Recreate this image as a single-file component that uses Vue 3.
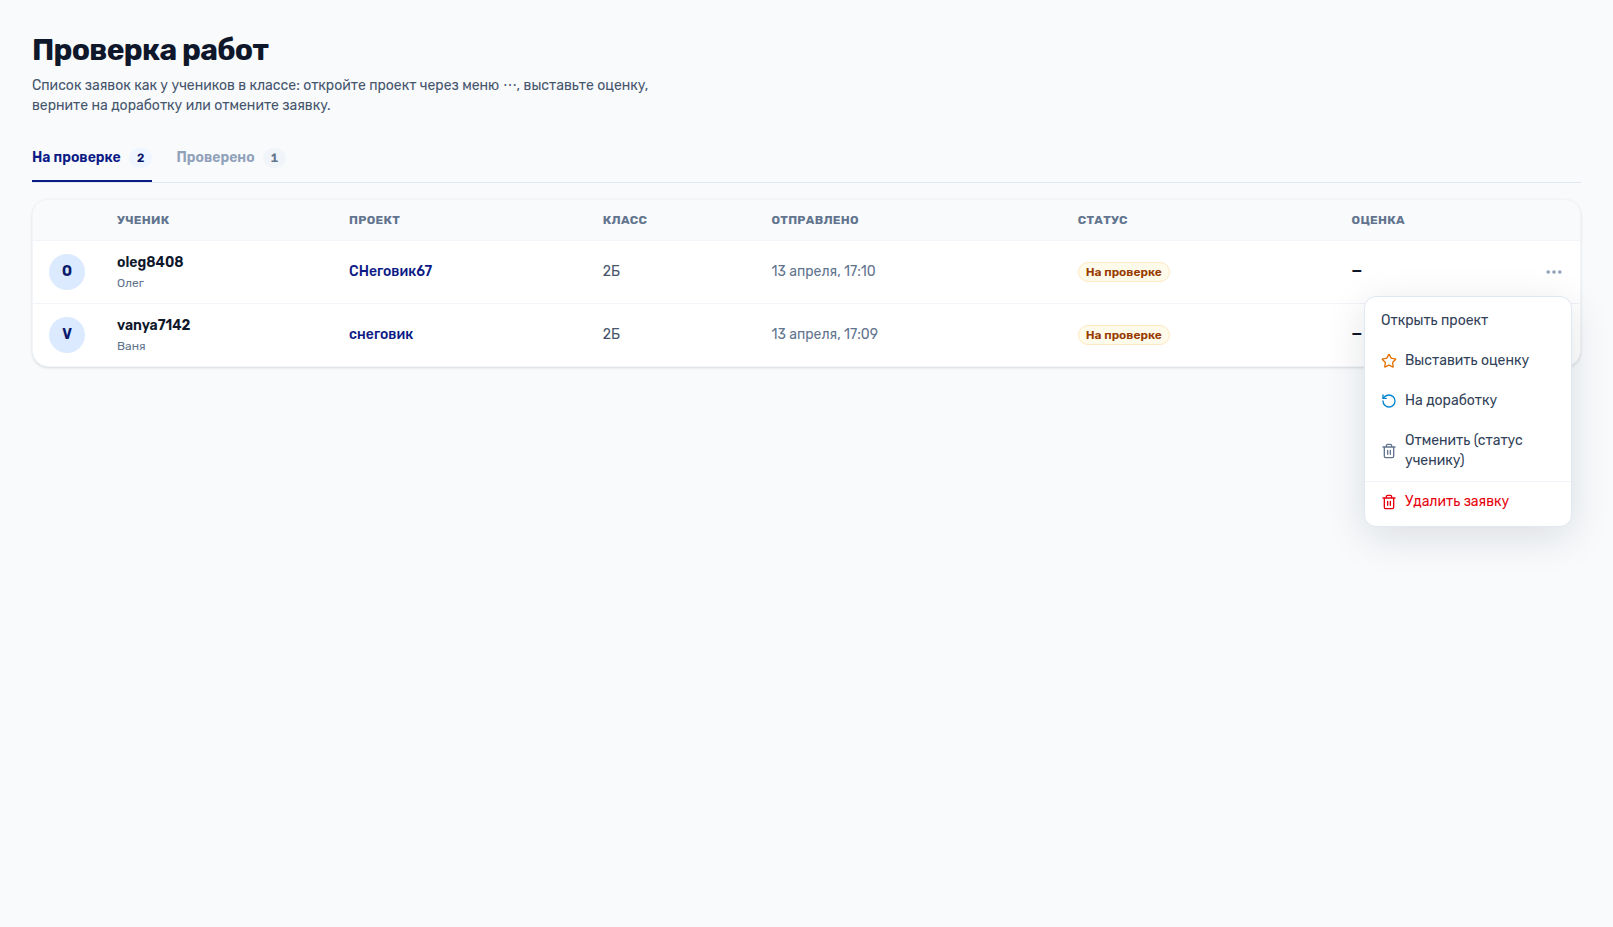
<script setup>
import { ref } from 'vue'

const tab = ref('pending')
const openMenu = ref(1)

const tabs = [
  { id: 'pending', label: 'На проверке', count: 2 },
  { id: 'done', label: 'Проверено', count: 1 },
]

const rows = [
  { id: 1, login: 'oleg8408', name: 'Олег', initial: 'O', project: 'СНеговик67', group: '2Б', sent: '13 апреля, 17:10' },
  { id: 2, login: 'vanya7142', name: 'Ваня', initial: 'V', project: 'снеговик', group: '2Б', sent: '13 апреля, 17:09' },
]

function toggle(id) {
  openMenu.value = openMenu.value === id ? null : id
}
</script>

<template>
  <main class="page">
    <h1 class="title">Проверка работ</h1>
    <p class="lead">
      Список заявок как у учеников в классе: откройте проект через меню ⋯, выставьте оценку,
      верните на доработку или отмените заявку.
    </p>

    <nav class="tabs">
      <button
        v-for="t in tabs"
        :key="t.id"
        type="button"
        class="tab"
        :class="{ active: tab === t.id }"
        @click="tab = t.id"
      >
        {{ t.label }}
        <span class="count">{{ t.count }}</span>
      </button>
    </nav>

    <section class="card">
      <table class="table">
        <thead>
          <tr>
            <th class="c-avatar"></th>
            <th class="c-user">Ученик</th>
            <th class="c-project">Проект</th>
            <th class="c-group">Класс</th>
            <th class="c-sent">Отправлено</th>
            <th class="c-status">Статус</th>
            <th class="c-grade">Оценка</th>
            <th class="c-actions"></th>
          </tr>
        </thead>
        <tbody>
          <tr v-for="r in rows" :key="r.id">
            <td><div class="avatar">{{ r.initial }}</div></td>
            <td>
              <div class="login">{{ r.login }}</div>
              <div class="name">{{ r.name }}</div>
            </td>
            <td class="project">{{ r.project }}</td>
            <td class="group">{{ r.group }}</td>
            <td class="sent">{{ r.sent }}</td>
            <td><span class="badge">На проверке</span></td>
            <td class="grade">—</td>
            <td class="actions">
              <div class="anchor">
                <button type="button" class="more" aria-label="Действия" @click="toggle(r.id)">
                  <svg viewBox="0 0 20 20" width="20" height="20" fill="currentColor">
                    <circle cx="4.2" cy="10" r="1.8" />
                    <circle cx="10" cy="10" r="1.8" />
                    <circle cx="15.8" cy="10" r="1.8" />
                  </svg>
                </button>
                <div v-if="openMenu === r.id" class="menu">
                  <button type="button" class="item">Открыть проект</button>
                  <button type="button" class="item">
                    <svg class="icon star" viewBox="0 0 24 24">
                      <path d="M11.525 2.295a.53.53 0 0 1 .95 0l2.31 4.679a2.123 2.123 0 0 0 1.595 1.16l5.166.756a.53.53 0 0 1 .294.904l-3.736 3.638a2.123 2.123 0 0 0-.611 1.878l.882 5.14a.53.53 0 0 1-.771.56l-4.618-2.428a2.122 2.122 0 0 0-1.973 0L6.396 21.01a.53.53 0 0 1-.77-.56l.881-5.139a2.122 2.122 0 0 0-.611-1.879L2.16 9.795a.53.53 0 0 1 .294-.906l5.165-.755a2.122 2.122 0 0 0 1.597-1.16z" />
                    </svg>
                    Выставить оценку
                  </button>
                  <button type="button" class="item">
                    <svg class="icon back" viewBox="0 0 24 24">
                      <path d="M3 12a9 9 0 1 0 9-9 9.75 9.75 0 0 0-6.74 2.74L3 8" />
                      <path d="M3 3v5h5" />
                    </svg>
                    На доработку
                  </button>
                  <button type="button" class="item">
                    <svg class="icon cancel" viewBox="0 0 24 24">
                      <path d="M3 6h18M19 6v14a2 2 0 0 1-2 2H7a2 2 0 0 1-2-2V6M8 6V4a2 2 0 0 1 2-2h4a2 2 0 0 1 2 2v2M10 11v6M14 11v6" />
                    </svg>
                    Отменить (статус ученику)
                  </button>
                  <button type="button" class="item danger">
                    <svg class="icon" viewBox="0 0 24 24">
                      <path d="M3 6h18M19 6v14a2 2 0 0 1-2 2H7a2 2 0 0 1-2-2V6M8 6V4a2 2 0 0 1 2-2h4a2 2 0 0 1 2 2v2M10 11v6M14 11v6" />
                    </svg>
                    Удалить заявку
                  </button>
                </div>
              </div>
            </td>
          </tr>
        </tbody>
      </table>
    </section>
  </main>
</template>

<style>
body {
  background: #f8fafc;
}
</style>

<style scoped>
.page {
  box-sizing: border-box;
  min-height: 100vh;
  padding: 32px;
  font-family: Rubik, Inter, Roboto, sans-serif;
  font-size: 14px;
  line-height: 20px;
  color: #0f172b;
}

button {
  font: inherit;
  border: 0;
  background: none;
  cursor: pointer;
}

.title {
  margin: 0;
  font-size: 30px;
  line-height: 36px;
  font-weight: 700;
  letter-spacing: -0.025em;
}

.lead {
  margin: 8px 0 0;
  max-width: 672px;
  color: #45556c;
}

.tabs {
  display: flex;
  gap: 24px;
  margin-top: 24px;
  border-bottom: 1px solid #e2e8f0;
}

.tab {
  display: flex;
  align-items: center;
  gap: 8px;
  padding: 8px 0 12px;
  border-bottom: 2px solid transparent;
  font-weight: 600;
  color: #90a1b9;
}

.tab.active {
  color: #0c1a86;
  border-bottom-color: #0c1a86;
}

.count {
  padding: 2px 8px;
  border-radius: 10px;
  background: #f1f5f9;
  color: #62748e;
  font-size: 12px;
  line-height: 16px;
  font-variant-numeric: tabular-nums;
}

.active .count {
  background: #eff6ff;
  color: #0c1a6b;
}

.card {
  margin-top: 16px;
  border: 1px solid #f1f5f9;
  border-radius: 16px;
  background: #fff;
  box-shadow: 0 1px 3px rgba(0, 0, 0, 0.1), 0 1px 2px -1px rgba(0, 0, 0, 0.1);
}

.table {
  width: 100%;
  table-layout: fixed;
  border-collapse: separate;
  border-spacing: 0;
}

th {
  box-sizing: border-box;
  padding: 12px 16px;
  border-bottom: 1px solid #f1f5f9;
  background: #f8fafc;
  color: #62748e;
  font-size: 12px;
  line-height: 16px;
  font-weight: 700;
  letter-spacing: 0.025em;
  text-align: left;
  text-transform: uppercase;
}

th:first-child {
  border-top-left-radius: 16px;
}

th:last-child {
  border-top-right-radius: 16px;
}

td {
  box-sizing: border-box;
  padding: 12px 16px;
  vertical-align: middle;
}

tr:not(:last-child) td {
  border-bottom: 1px solid #f1f5f9;
}

.c-avatar { width: 4.4%; }
.c-user { width: 15%; }
.c-project { width: 16.4%; }
.c-group { width: 10.9%; }
.c-sent { width: 19.8%; }
.c-status { width: 17.7%; }
.c-grade { width: 9%; }

.avatar {
  display: flex;
  align-items: center;
  justify-content: center;
  width: 36px;
  height: 36px;
  border-radius: 50%;
  background: #dbeafe;
  color: #0c1a6b;
  font-weight: 700;
}

.login {
  font-weight: 600;
}

.name {
  margin-top: 2px;
  color: #62748e;
  font-size: 12px;
  line-height: 16px;
}

.project {
  color: #0c1a86;
  font-weight: 500;
}

.group {
  color: #45556c;
}

.sent {
  color: #62748e;
}

.badge {
  display: inline-block;
  padding: 1px 7px;
  border: 1px solid #fee9c0;
  border-radius: 10px;
  background: #fffbeb;
  color: #973c00;
  font-size: 12px;
  line-height: 16px;
  font-weight: 600;
}

.grade {
  font-weight: 600;
}

td.actions {
  padding: 12px 8px;
}

.anchor {
  position: relative;
  display: flex;
  justify-content: flex-end;
}

.more {
  display: flex;
  padding: 8px;
  border-radius: 8px;
  color: #90a1b9;
}

.menu {
  position: absolute;
  top: 100%;
  right: 0;
  z-index: 10;
  box-sizing: border-box;
  width: 208px;
  margin-top: 6px;
  padding: 4px 0;
  border: 1px solid #e2e8f0;
  border-radius: 12px;
  background: #fff;
  box-shadow: 0 10px 40px rgba(15, 23, 43, 0.12);
}

.item {
  display: flex;
  align-items: center;
  gap: 8px;
  width: 100%;
  padding: 10px 16px;
  color: #314158;
  text-align: left;
}

.item.danger {
  border-top: 1px solid #f1f5f9;
  color: #e7000b;
}

.icon {
  flex: none;
  width: 16px;
  height: 16px;
  fill: none;
  stroke: currentColor;
  stroke-width: 2;
  stroke-linecap: round;
  stroke-linejoin: round;
}

.star {
  color: #e17100;
}

.back {
  color: #0084d1;
}

.cancel {
  color: #62748e;
}
</style>
